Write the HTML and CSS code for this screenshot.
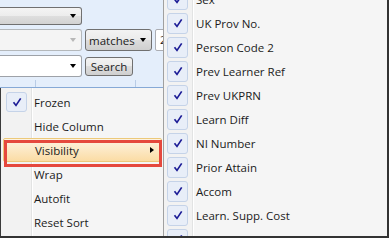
FILE: index.html
```html
<!DOCTYPE html>
<html>
<head>
<meta charset="utf-8">
<link rel="stylesheet" href="styles.css">
</head>
<body>
<div class="screen">
  <div class="toolbar">
    <div class="row r1">
      <div class="combo c1"><span class="arrow"></span></div>
    </div>
    <div class="row r2">
      <div class="combo c2"><span class="arrow"></span></div>
      <div class="btn matches"><span class="btn-text">matches</span><span class="arrow"></span></div>
      <div class="textbox">2</div>
    </div>
    <div class="row r3">
      <div class="combo c3"><span class="arrow"></span></div>
      <div class="btn search">Search</div>
    </div>
  </div>
  <div class="grid-head">
    <span class="col c-a"></span>
    <span class="col c-b"></span>
  </div>

  <div class="menu">
    <div class="item"><div class="gut"><span class="chk"><svg viewBox="0 0 10 10" width="10" height="10"><path d="M1.5 5.2 L4 8.4 L8.7 1.4" fill="none" stroke="#1c1c96" stroke-width="1.7"/></svg></span></div><span class="label">Frozen</span></div>
    <div class="item"><div class="gut"></div><span class="label">Hide Column</span></div>
    <div class="item hot"><div class="gut"></div><span class="label">Visibility</span><span class="sub-arrow"></span></div>
    <div class="item"><div class="gut"></div><span class="label">Wrap</span></div>
    <div class="item"><div class="gut"></div><span class="label">Autofit</span></div>
    <div class="item"><div class="gut"></div><span class="label">Reset Sort</span></div>
  </div>

  <div class="submenu">
    <div class="item"><div class="gut"><span class="chk"><svg viewBox="0 0 10 10" width="10" height="10"><path d="M1.5 5.2 L4 8.4 L8.7 1.4" fill="none" stroke="#1c1c96" stroke-width="1.7"/></svg></span></div><span class="label">Sex</span></div>
    <div class="item"><div class="gut"><span class="chk"><svg viewBox="0 0 10 10" width="10" height="10"><path d="M1.5 5.2 L4 8.4 L8.7 1.4" fill="none" stroke="#1c1c96" stroke-width="1.7"/></svg></span></div><span class="label">UK Prov No.</span></div>
    <div class="item"><div class="gut"><span class="chk"><svg viewBox="0 0 10 10" width="10" height="10"><path d="M1.5 5.2 L4 8.4 L8.7 1.4" fill="none" stroke="#1c1c96" stroke-width="1.7"/></svg></span></div><span class="label">Person Code 2</span></div>
    <div class="item"><div class="gut"><span class="chk"><svg viewBox="0 0 10 10" width="10" height="10"><path d="M1.5 5.2 L4 8.4 L8.7 1.4" fill="none" stroke="#1c1c96" stroke-width="1.7"/></svg></span></div><span class="label">Prev Learner Ref</span></div>
    <div class="item"><div class="gut"><span class="chk"><svg viewBox="0 0 10 10" width="10" height="10"><path d="M1.5 5.2 L4 8.4 L8.7 1.4" fill="none" stroke="#1c1c96" stroke-width="1.7"/></svg></span></div><span class="label">Prev UKPRN</span></div>
    <div class="item"><div class="gut"><span class="chk"><svg viewBox="0 0 10 10" width="10" height="10"><path d="M1.5 5.2 L4 8.4 L8.7 1.4" fill="none" stroke="#1c1c96" stroke-width="1.7"/></svg></span></div><span class="label">Learn Diff</span></div>
    <div class="item"><div class="gut"><span class="chk"><svg viewBox="0 0 10 10" width="10" height="10"><path d="M1.5 5.2 L4 8.4 L8.7 1.4" fill="none" stroke="#1c1c96" stroke-width="1.7"/></svg></span></div><span class="label">NI Number</span></div>
    <div class="item"><div class="gut"><span class="chk"><svg viewBox="0 0 10 10" width="10" height="10"><path d="M1.5 5.2 L4 8.4 L8.7 1.4" fill="none" stroke="#1c1c96" stroke-width="1.7"/></svg></span></div><span class="label">Prior Attain</span></div>
    <div class="item"><div class="gut"><span class="chk"><svg viewBox="0 0 10 10" width="10" height="10"><path d="M1.5 5.2 L4 8.4 L8.7 1.4" fill="none" stroke="#1c1c96" stroke-width="1.7"/></svg></span></div><span class="label">Accom</span></div>
    <div class="item"><div class="gut"><span class="chk"><svg viewBox="0 0 10 10" width="10" height="10"><path d="M1.5 5.2 L4 8.4 L8.7 1.4" fill="none" stroke="#1c1c96" stroke-width="1.7"/></svg></span></div><span class="label">Learn. Supp. Cost</span></div>
    <div class="item"><div class="gut"><span class="chk"><svg viewBox="0 0 10 10" width="10" height="10"><path d="M1.5 5.2 L4 8.4 L8.7 1.4" fill="none" stroke="#1c1c96" stroke-width="1.7"/></svg></span></div><span class="label">Planned Learning Hours</span></div>
  </div>

  <div class="callout"></div>
  <div class="frame"></div>
</div>
</body>
</html>
```

FILE: styles.css
```css
* { box-sizing: border-box; }
html, body { margin: 0; padding: 0; }
body {
  width: 389px;
  height: 238px;
  overflow: hidden;
  font-family: "Open Sans", "Noto Sans", sans-serif;
  font-size: 11.5px;
  color: #1b1b1b;
}
.screen {
  position: relative;
  width: 389px;
  height: 238px;
  background: #e4eefb;
  overflow: hidden;
}

/* toolbar */
.toolbar {
  display: flex;
  flex-direction: column;
  gap: 4px;
  padding-top: 7px;
  height: 77px;
}
.row { display: flex; align-items: center; gap: 3px; }
.r1 { height: 18px; }
.r2, .r3 { height: 22px; }
.combo {
  width: 82px;
  height: 100%;
  border: 1px solid #707070;
  border-left: none;
  border-radius: 0 3px 3px 0;
  display: flex;
  align-items: center;
  justify-content: flex-end;
  padding-right: 5px;
}
.c1 { background: linear-gradient(#f4f4f4 0%, #ececec 50%, #dedede 50%, #d2d2d2 100%); }
.c2 { background: #f4f4f4; border-color: #b4b8bb; }
.c3 { background: #ffffff; border-color: #9ea2a8; }
.arrow {
  width: 0;
  height: 0;
  border-left: 3.5px solid transparent;
  border-right: 3.5px solid transparent;
  border-top: 4px solid #000;
}
.c2 .arrow { border-top-color: #b8b8b8; }
.btn {
  display: flex;
  align-items: center;
  border: 1px solid #707070;
  border-radius: 3px;
  background: linear-gradient(#f3f3f3 0%, #ebebeb 50%, #dddddd 50%, #cfcfcf 100%);
  height: 100%;
}
.matches {
  width: 67px;
  padding-left: 3px;
  padding-right: 5px;
  justify-content: space-between;
}
.search {
  width: 48px;
  height: 19px;
  justify-content: center;
}
.textbox {
  width: 12px;
  height: 100%;
  background: #fff;
  border: 1px solid #abadb3;
  border-radius: 2px;
  padding-left: 4px;
  line-height: 20px;
  overflow: hidden;
}
.grid-head {
  position: relative;
  height: 11px;
  border-bottom: 1px solid #86a9d6;
}
.col {
  position: absolute;
  top: 3px;
  bottom: 0;
  width: 1px;
  background: #b9cce6;
}
.c-a { left: 35px; }
.c-b { left: 135px; }

/* menus */
.menu, .submenu {
  position: absolute;
  background-color: #f5f5f5;
}
.menu {
  left: 0;
  top: 88px;
  width: 164px;
  bottom: 0;
  border-left: 1px solid #3a3a3a;
  padding-top: 2px;
  background-image: linear-gradient(to right, #f2f2f2 0 30px, #e2e3e3 30px 31px, #ffffff 31px 32px, transparent 32px);
}
.submenu {
  left: 163px;
  top: -13px;
  right: 0;
  bottom: 0;
  border-left: 1px solid #a0a0a0;
  background-image: linear-gradient(to right, #f2f2f2 0 28px, #e2e3e3 28px 29px, #ffffff 29px 30px, transparent 30px);
}
.item {
  display: flex;
  align-items: center;
  height: 24px;
}
.gut {
  flex: none;
  display: flex;
  align-items: center;
}
.menu .gut { width: 31px; padding-left: 5px; }
.submenu .gut { width: 29px; padding-left: 3px; }
.chk {
  width: 21px;
  height: 21px;
  border: 1px solid #c5d3e8;
  border-radius: 3px;
  background: #e8eef8;
  display: flex;
  align-items: center;
  justify-content: center;
}
.menu .chk { height: 20px; }
.label { padding-left: 2px; white-space: nowrap; }
.submenu .label { padding-left: 3px; }
.hot {
  margin: 0 2px;
  background: linear-gradient(#fdf3e1 0%, #fce8c4 50%, #fbdca4 100%);
  border: 1px solid #ecc97a;
  border-radius: 2px;
}
.hot .gut { width: 29px; padding-left: 3px; }
.sub-arrow {
  margin-left: auto;
  margin-right: 7px;
  width: 0;
  height: 0;
  border-top: 3.5px solid transparent;
  border-bottom: 3.5px solid transparent;
  border-left: 4px solid #000;
}
.callout {
  position: absolute;
  left: 4px;
  top: 140px;
  width: 158px;
  height: 27px;
  border: 3px solid #e5483d;
}
.frame {
  position: absolute;
  inset: 0;
  border-right: 2px solid #333;
  border-bottom: 2px solid #333;
  pointer-events: none;
}
```
